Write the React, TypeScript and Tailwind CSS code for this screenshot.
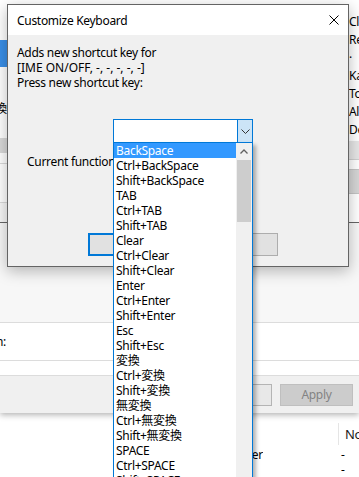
import React from "react";

const keys = [
  "BackSpace",
  "Ctrl+BackSpace",
  "Shift+BackSpace",
  "TAB",
  "Ctrl+TAB",
  "Shift+TAB",
  "Clear",
  "Ctrl+Clear",
  "Shift+Clear",
  "Enter",
  "Ctrl+Enter",
  "Shift+Enter",
  "Esc",
  "Shift+Esc",
  "変換",
  "Ctrl+変換",
  "Shift+変換",
  "無変換",
  "Ctrl+無変換",
  "Shift+無変換",
  "SPACE",
  "Ctrl+SPACE",
  "Shift+SPACE",
  "Ctrl+Shift+SPACE",
];

const sideLabels = ["Close", "Reconvert", "·", "Kana", "Toggle", "Alphanumeric", "Delete"];

const App = () => {
  return (
    <div className="relative w-[359px] h-[477px] overflow-hidden bg-white text-[12px] leading-[15px] tracking-[-0.3px] text-black font-['Noto_Sans','Noto_Sans_CJK_JP',sans-serif]">
      {/* settings window behind the dialog */}
      <div className="relative z-[1] flex flex-col h-[413px] bg-white shadow-[0_2px_6px_rgba(0,0,0,0.3)]">
        <div className="flex h-[223px] border-b border-[#666666]">
          <div className="w-[7px] shrink-0 flex flex-col">
            <div className="h-[40px]" />
            <div className="h-[27px] bg-[#3a8fe8]" />
            <div className="h-[34px]" />
            <div className="h-[15px] flex justify-end overflow-hidden whitespace-nowrap">無変換</div>
            <div className="h-[22px]" />
            <div className="h-[15px] bg-[#d9d9d9]" />
            <div className="h-[10px]" />
            <div className="h-[39px] border-t border-[#dadada]" />
            <div className="flex-1 border-t border-[#dadada] bg-[#f7f7f7]" />
          </div>
          <div className="flex-1" />
          <div className="w-[11px] shrink-0 flex flex-col overflow-hidden">
            <div className="pt-[13px] pl-[1px] flex flex-col">
              {sideLabels.map((l) => (
                <div key={l} className="h-[18px] leading-[18px] whitespace-nowrap">
                  {l}
                </div>
              ))}
            </div>
            <div className="mt-[2px] h-[19px] bg-[#e6e6e6] border-b border-[#cfcfcf]" />
            <div className="h-[9px]" />
            <div className="h-[25px] bg-[#d6d6d6] border-t border-b border-[#c4c4c4]" />
            <div className="flex-1" />
          </div>
        </div>
        <div className="h-[99px] bg-[#f7f7f7]" />
        <div className="h-[39px] flex items-center border-t border-b border-[#dcdcdc] bg-white">
          <div className="w-[6px] shrink-0 flex justify-end overflow-hidden whitespace-nowrap">Current function:</div>
        </div>
        <div className="h-[14px] bg-white" />
        <div className="flex-1 flex items-center justify-end gap-[8px] pr-[6px] bg-[#f0f0f0] border-t border-[#dcdcdc]">
          <div className="w-[73px] h-[22px] border border-[#b4b4b4] bg-[#e8e8e8] flex items-center justify-center">OK</div>
          <div className="w-[73px] h-[22px] border border-[#bfbfbf] bg-[#cccccc] text-[#838383] flex items-center justify-center">
            Apply
          </div>
        </div>
      </div>

      {/* list window at the bottom */}
      <div className="flex flex-col h-[64px] bg-white pt-[9px]">
        <div className="flex h-[24px] items-center">
          <div className="w-[338px] shrink-0" />
          <div className="h-[22px] shrink-0 border-l border-[#e5e5e5] pl-[6px] flex items-center whitespace-nowrap text-[13px] text-[#1a1a1a]">
            Notes
          </div>
        </div>
        <div className="flex h-[15px] mt-[1px] items-center">
          <div className="w-[263px] shrink-0 flex justify-end overflow-hidden whitespace-nowrap">Ctrl+Enter</div>
          <div className="w-[78px] shrink-0" />
          <div>-</div>
        </div>
        <div className="flex h-[15px] items-center">
          <div className="w-[341px] shrink-0" />
          <div>-</div>
        </div>
      </div>

      {/* Customize Keyboard dialog */}
      <div className="absolute z-[2] left-[7px] top-[4px] w-[342px] h-[263px] flex flex-col border border-[#646464] bg-[#f0f0f0] shadow-[0_4px_14px_rgba(0,0,0,0.28)]">
        <div className="h-[30px] bg-white flex items-center justify-between pl-[9px] pr-[9px]">
          <span>Customize Keyboard</span>
          <svg width="10" height="10" viewBox="0 0 10 10">
            <path d="M0.5 0.5L9.5 9.5M9.5 0.5L0.5 9.5" stroke="#000" strokeWidth="1" />
          </svg>
        </div>
        <div className="flex flex-col px-[9px] pt-[10px]">
          <div>Adds new shortcut key for</div>
          <div className="tracking-normal">[IME ON/OFF, -, -, -, -, -]</div>
          <div>Press new shortcut key:</div>
          <div className="mt-[29px] ml-[96px] w-[140px] h-[24px] flex border border-[#0078d7] bg-white">
            <div className="flex-1" />
            <div className="w-[15px] bg-[#cce4f7] border-l border-[#0078d7] flex items-center justify-center">
              <svg width="9" height="5" viewBox="0 0 9 5">
                <path d="M0.5 0.5L4.5 4.5L8.5 0.5" fill="none" stroke="#333" strokeWidth="1" />
              </svg>
            </div>
          </div>
          <div className="mt-[11px] ml-[10px]">Current function:</div>
          <div className="mt-[64px] ml-[71px] flex gap-[40px]">
            <div className="w-[75px] h-[23px] border-2 border-[#0078d7] bg-[#e1e1e1] flex items-center justify-center">OK</div>
            <div className="w-[75px] h-[23px] border border-[#adadad] bg-[#e1e1e1] flex items-center justify-center pr-[14px]">
              Clear
            </div>
          </div>
        </div>
      </div>

      {/* open combo list */}
      <div className="absolute z-[3] left-[113px] top-[142px] w-[140px] h-[345px] flex border border-[#0078d7] bg-white shadow-[3px_3px_4px_rgba(0,0,0,0.3)]">
        <div className="flex-1 flex flex-col overflow-hidden">
          {keys.map((k, i) => (
            <div
              key={k}
              className={
                i === 0
                  ? "h-[15px] pl-[2px] whitespace-nowrap bg-[#3399ff] text-white"
                  : "h-[15px] pl-[2px] whitespace-nowrap"
              }
            >
              {k}
            </div>
          ))}
        </div>
        <div className="w-[16px] flex flex-col bg-[#f0f0f0]">
          <div className="h-[17px] flex items-center justify-center">
            <svg width="8" height="5" viewBox="0 0 8 5">
              <path d="M0.5 4.5L4 1L7.5 4.5" fill="none" stroke="#606060" strokeWidth="1.3" />
            </svg>
          </div>
          <div className="mx-[1px] h-[62px] bg-[#cdcdcd]" />
        </div>
      </div>
    </div>
  );
};

export default App;
